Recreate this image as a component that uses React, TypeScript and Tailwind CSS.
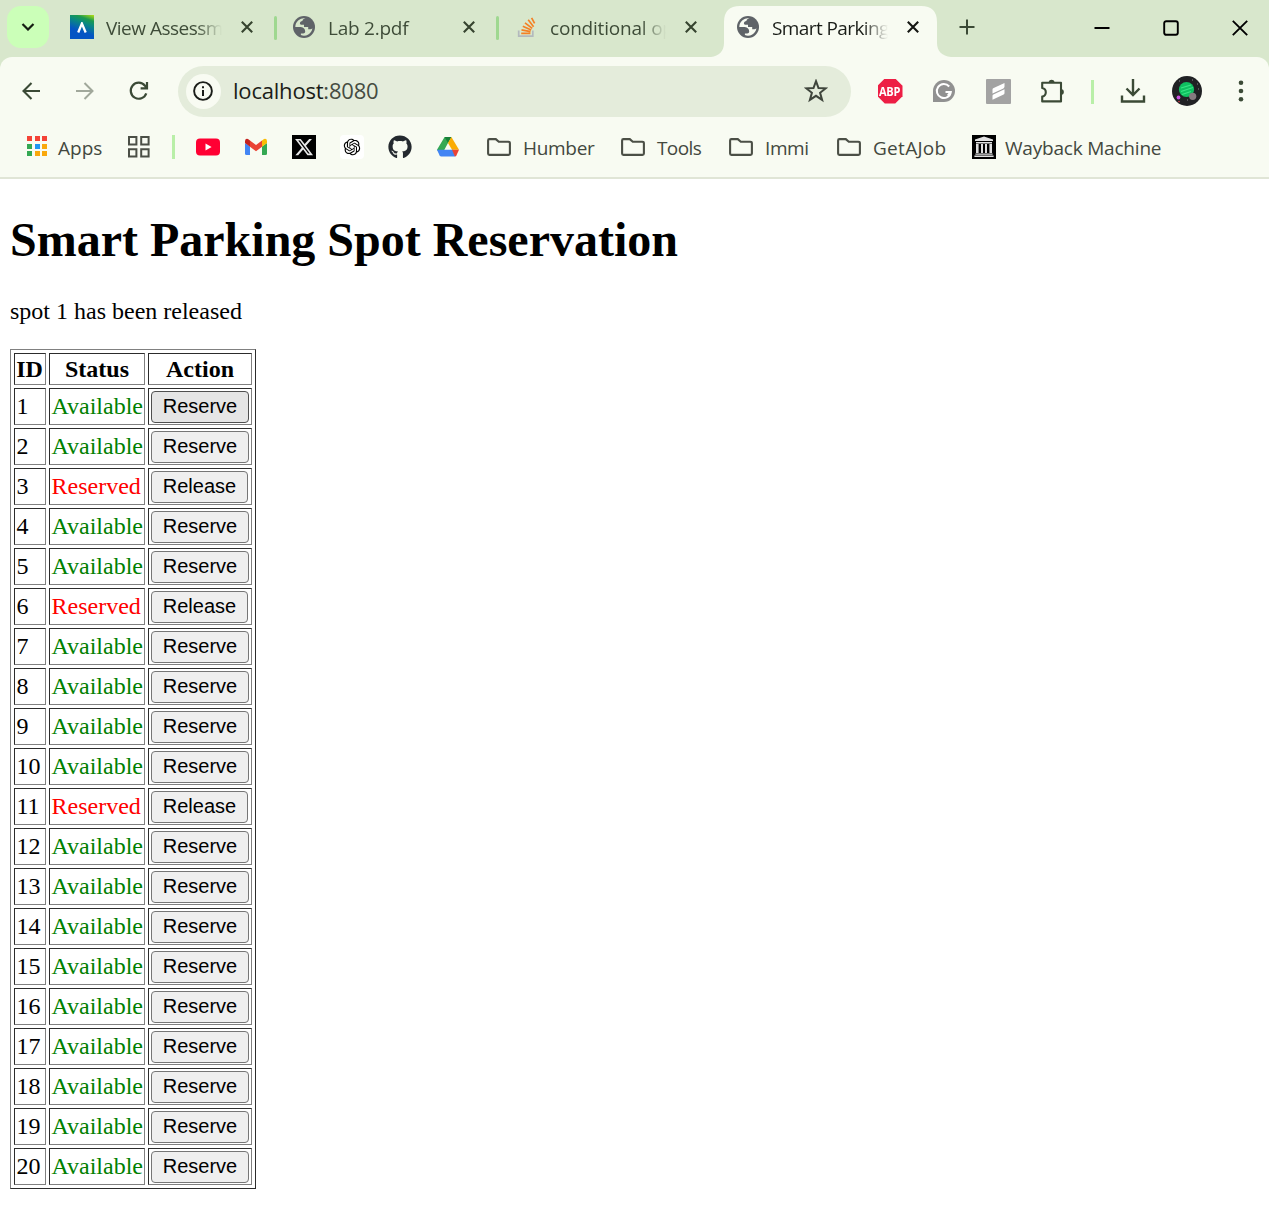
import type { ReactNode } from "react";
import { FaGithub, FaXTwitter } from "react-icons/fa6";
import { RiOpenaiFill } from "react-icons/ri";

function Globe({ land }: { land: string }) {
  return (
    <svg viewBox="0 0 22 22" className="size-[22px]">
      <circle cx="11" cy="11" r="11" fill="#5f6368" />
      <path
        d="M12.6 2.5C10.6 2.6 9.6 3.6 9.4 5C8 5.2 6.9 6 6.9 7.2C6.9 8.4 7.8 8.8 9.4 8.8H11V11H15.2V13.2H17.4C18.2 13.2 18.8 12.8 19.4 12.2A8.6 8.6 0 0 1 7.9 19.1V17.6H10.2C11.4 17.6 12.2 16.8 12.2 15.6C12.2 13 10.6 11.2 7.8 11H2.3A8.7 8.7 0 0 1 12.6 2.5Z"
        fill={land}
      />
    </svg>
  );
}

function StackOverflow() {
  return (
    <svg viewBox="0 0 24 24" className="size-6" fill="none">
      <path d="M4.7 15.5V21.2H18.8V15.5" stroke="#b3b9bd" strokeWidth="1.7" />
      <g stroke="#f48024" strokeWidth="1.7">
        <path d="M7.2 18.3H16.4M7.5 14.8L16.5 16.6M8.8 11.2L17.2 15M11 7.8L18.2 13.4M14.2 4.8L19.6 11.8M17.6 2.8L20.6 8.4" />
      </g>
    </svg>
  );
}

function Cross({ color }: { color: string }) {
  return (
    <svg viewBox="0 0 12 12" className="size-3">
      <path d="M.8.8L11.2 11.2M11.2.8L.8 11.2" stroke={color} strokeWidth="2.1" />
    </svg>
  );
}

function Tab({ icon, title, tracking, active, last }: { icon: ReactNode; title: string; tracking: string; active?: boolean; last?: boolean }) {
  return (
    <div className="relative flex h-[57px] w-[222px] shrink-0 items-center pl-4">
      {active && (
        <svg viewBox="0 0 240 51" className="absolute top-[6px] left-[-9px] h-[51px] w-[240px]">
          <path d="M0 51C8 50 13 45 13 37V16Q13 0 29 0H210Q226 0 226 16V37C226 45 231 50 240 51Z" fill="#f8fbf2" />
        </svg>
      )}
      <div className="relative -mt-[3px] flex size-6 items-center justify-center">{icon}</div>
      <div
        className={
          "relative -mt-0.5 ml-3 h-[30px] w-[116px] overflow-hidden text-[19px] leading-[30px] whitespace-nowrap [mask-image:linear-gradient(to_right,black_78%,transparent)] " +
          tracking +
          (active ? " text-[#1a1d18]" : " text-[#3e4c38]")
        }
      >
        {title}
      </div>
      <div className="relative -mt-[3px] ml-[19px]">
        <Cross color={active ? "#151713" : "#36442f"} />
      </div>
      {!active && !last && <div className="absolute top-4 right-0 h-6 w-[3px] translate-x-px rounded-full bg-[#9fd890]" />}
    </div>
  );
}

function TabStrip() {
  return (
    <div className="flex h-[57px] bg-[#d8e7cc]">
      <div className="mt-[6px] mr-[5px] ml-[7px] flex size-[42px] shrink-0 items-center justify-center rounded-[14px] bg-[#cbffb8]">
        <svg viewBox="0 0 14 8" className="h-2 w-3.5" fill="none">
          <path d="M1.5 1L7 6.5L12.5 1" stroke="#151d12" strokeWidth="2.2" />
        </svg>
      </div>
      <Tab
        title="View Assessm"
        tracking="tracking-[-0.5px]"
        icon={
          <div className="flex size-6 items-center justify-center bg-[linear-gradient(20deg,#0455c4_35%,#0a8a80_65%,#1a9a50_80%,#b8e010_100%)]">
            <svg viewBox="0 0 10 11" className="h-[11px] w-2.5">
              <path d="M1.2 10.5L4.9 1.5L8.7 10.5" fill="none" stroke="white" strokeWidth="2.3" />
            </svg>
          </div>
        }
      />
      <Tab title="Lab 2.pdf" tracking="tracking-[-0.25px]" icon={<Globe land="#d8e7cc" />} />
      <Tab title="conditional op" tracking="tracking-[-0.2px]" icon={<StackOverflow />} last />
      <Tab title="Smart Parking" tracking="tracking-[-0.6px]" icon={<Globe land="#f8fbf2" />} active />
      <div className="flex grow items-center justify-end">
        <svg viewBox="0 0 16 16" className="-mt-[3px] mr-auto ml-[17px] size-4">
          <path d="M8 .5V15.5M.5 8H15.5" stroke="#3b4a36" strokeWidth="2" />
        </svg>
        <svg viewBox="0 0 16 16" className="-mt-px mr-[53px] size-4">
          <path d="M.5 8H15.5" stroke="#000" strokeWidth="2" />
        </svg>
        <svg viewBox="0 0 16 16" className="-mt-px mr-[53px] size-4" fill="none">
          <rect x="1.2" y="1.2" width="13.6" height="13.6" rx="2" stroke="#000" strokeWidth="1.9" />
        </svg>
        <svg viewBox="0 0 16 16" className="-mt-px mr-[21px] size-4">
          <path d="M.8.8L15.2 15.2M15.2.8L.8 15.2" stroke="#000" strokeWidth="1.9" />
        </svg>
      </div>
    </div>
  );
}

function Cell({ children }: { children: ReactNode }) {
  return <div className="-mt-px flex w-[54px] shrink-0 items-center justify-center">{children}</div>;
}

function Toolbar() {
  return (
    <div className="bg-[#d8e7cc]">
      <div className="flex h-[69px] items-center rounded-t-[12px] bg-[#f8fbf2] pl-1">
        <Cell>
          <svg viewBox="0 0 18 18" className="size-[18px]" fill="none" stroke="#3b4a36" strokeWidth="2.1">
            <path d="M18 9H1.5M9.5 1L1.5 9L9.5 17" />
          </svg>
        </Cell>
        <Cell>
          <svg viewBox="0 0 18 18" className="size-[18px]" fill="none" stroke="#a1a89b" strokeWidth="2">
            <path d="M0 9H16.5M8.5 1L16.5 9L8.5 17" />
          </svg>
        </Cell>
        <Cell>
          <svg viewBox="0 0 20 20" className="size-5" fill="none" stroke="#3b4a36" strokeWidth="2.2">
            <path d="M17.3 12.4A8 8 0 1 1 16 4.7L17.8 7M18 1V7.4H11.6" />
          </svg>
        </Cell>
        <div className="ml-3 flex h-[51px] w-[673px] shrink-0 items-center rounded-full bg-[#e4ecdb] pl-2">
          <div className="flex size-[35px] items-center justify-center rounded-full bg-[#f8fbf2]">
            <svg viewBox="0 0 20 20" className="-mt-px -ml-px size-5" fill="none" stroke="#1a1d18">
              <circle cx="10" cy="10" r="8.9" strokeWidth="1.9" />
              <path d="M10 9V15M10 5.2V7.2" strokeWidth="2" />
            </svg>
          </div>
          <div className="-mt-0.5 ml-3 text-[22px] tracking-[-0.2px] text-[#1a1d18]">
            localhost<span className="text-[#464c42]">:8080</span>
          </div>
          <svg viewBox="0 0 24 24" className="-mt-px mr-[23px] ml-auto size-6" fill="none">
            <path d="M12 2.2L14.5 9L21.8 9.3L16.1 13.8L18.1 20.9L12 16.8L5.9 20.9L7.9 13.8L2.2 9.3L9.5 9Z" stroke="#3f453c" strokeWidth="2" />
          </svg>
        </div>
        <div className="ml-[12px] flex items-center">
          <Cell>
            <div className="flex size-[25px] items-center justify-center bg-[#ed1e45] [clip-path:polygon(29%_0,71%_0,100%_29%,100%_71%,71%_100%,29%_100%,0_71%,0_29%)]">
              <span className="scale-x-85 text-[13px] leading-none font-bold tracking-[-0.2px] text-white">ABP</span>
            </div>
          </Cell>
          <Cell>
            <svg viewBox="0 0 24 24" className="size-6" fill="none">
              <path d="M12 1A11 11 0 1 1 12 23H1V12A11 11 0 0 1 12 1Z" fill="#919191" />
              <path d="M17.2 7.5A7 7 0 1 0 18.8 13H13.5M15.8 16.5L18.6 12.8" stroke="white" strokeWidth="2" />
            </svg>
          </Cell>
          <Cell>
            <svg viewBox="0 0 25 25" className="size-[25px]">
              <rect width="25" height="25" rx="1" fill="#a3a3a3" />
              <path d="M6.5 10.4Q6.5 9.6 7.2 9.2L18.5 4V7.6Q18.5 8.8 17.4 9.4L6.5 14.6ZM6.5 16.8Q6.5 15.8 7.4 15.4L18.5 10.2V14Q18.5 15 17.6 15.5L6.5 20.8Z" fill="white" />
            </svg>
          </Cell>
          <Cell>
            <svg viewBox="0 0 26 26" className="size-[26px]">
              <path d="M3.2 4.8H22V23.4H3.2V18.6C8 17.6 8 10.9 3.2 10Z" fill="none" stroke="#3b4a36" strokeWidth="2.1" strokeLinejoin="round" />
              <path d="M9.6 4A3.1 3.1 0 0 1 15.6 4ZM22.6 11A3.1 3.1 0 0 1 22.6 17Z" fill="#3b4a36" />
            </svg>
          </Cell>
          <div className="mr-3 ml-[12px] h-6 w-[3px] bg-[#b9efa8]" />
          <Cell>
            <svg viewBox="0 0 26 26" className="size-[26px]" fill="none" stroke="#3b4a36" strokeWidth="2.4">
              <path d="M13 1V17M6.5 10.5L13 17L19.5 10.5M2 17.5V23.5H24V17.5" />
            </svg>
          </Cell>
          <Cell>
            <svg viewBox="0 0 30 30" className="size-[30px]">
              <circle cx="15" cy="15" r="15" fill="#202124" />
              <circle cx="14.5" cy="13.5" r="7.6" fill="#0fc060" />
              <path d="M9 12L19 9M9 15.5L21 11.5M10 18.5L19 15.5" stroke="#3be486" strokeWidth="1.1" />
              <circle cx="20.7" cy="20.3" r="3.6" fill="#857b80" />
              <circle cx="6.5" cy="21.5" r="1.9" fill="#c850e0" />
              <circle cx="7" cy="25.6" r=".8" fill="#d84050" />
              <path d="M20 4h1M25 8h1M7 5h1M26 13h1M15 24h1" stroke="#8a8a8e" />
            </svg>
          </Cell>
          <Cell>
            <svg viewBox="0 0 6 22" className="h-[22px] w-1.5" fill="#3b4a36">
              <circle cx="3" cy="2.7" r="2.3" />
              <circle cx="3" cy="11" r="2.3" />
              <circle cx="3" cy="19.3" r="2.3" />
            </svg>
          </Cell>
        </div>
      </div>
    </div>
  );
}

function Folder({ name, className }: { name: string; className: string }) {
  return (
    <div className={"flex shrink-0 items-center gap-3 " + className}>
      <svg viewBox="0 0 24 18" className="h-[18px] w-6 shrink-0" fill="none">
        <path d="M1.1 2.4Q1.1 1.1 2.4 1.1H8.8L11.8 3.8H21.4Q22.9 3.8 22.9 5.2V15.6Q22.9 16.9 21.4 16.9H2.4Q1.1 16.9 1.1 15.6Z" stroke="#4b4f46" strokeWidth="2.1" />
      </svg>
      <span className="mt-0.5">{name}</span>
    </div>
  );
}

const appDots = ["#f44336", "#f44336", "#f44336", "#34a853", "#2196f3", "#f9a80c", "#34a853", "#f9a80c", "#f9a80c"];

function Bookmarks() {
  return (
    <div className="flex h-[53px] items-center border-b-2 border-[#e0e5d6] bg-[#f8fbf2] pb-[9px] pl-[27px] text-[19px] whitespace-nowrap text-[#43483e]">
      <div className="mb-0.5 grid w-5 shrink-0 grid-cols-3 gap-[2.5px]">
        {appDots.map((color, i) => (
          <div key={i} className="size-[5px]" style={{ backgroundColor: color }} />
        ))}
      </div>
      <span className="mt-0.5 ml-[11px] w-[70px] shrink-0">Apps</span>
      <svg viewBox="0 0 22 22" className="size-[22px] shrink-0" fill="none" stroke="#4b4f46" strokeWidth="2">
        <path d="M1 1H8.4V8.4H1ZM13.2 1H20.6V8.4H13.2ZM1 13.2H8.4V20.6H1ZM13.2 13.2H20.6V20.6H13.2Z" />
      </svg>
      <div className="ml-[22px] h-6 w-[3px] shrink-0 bg-[#b9efa8]" />
      <div className="ml-[21px] flex shrink-0 items-center gap-6">
        <svg viewBox="0 0 24 18" className="h-[18px] w-6">
          <rect y=".5" width="24" height="17" rx="4" fill="#ff0033" />
          <path d="M9.5 5.6L15.6 9L9.5 12.4Z" fill="white" />
        </svg>
        <svg viewBox="0 0 24 24" className="size-6">
          <path d="M1 8V18.8Q1 20 2.5 20H6V11.5Z" fill="#4285f4" />
          <path d="M23 8V18.8Q23 20 21.5 20H18V11.5Z" fill="#34a853" />
          <path d="M18 5.5V11.8L23 8V6Q22.8 3.2 20 4Z" fill="#fbbc04" />
          <path d="M6 5.5V11.8L1 8V6Q1.2 3.2 4 4Z" fill="#c5221f" />
          <path d="M6 5.5L12 10L18 5.5V11.8L12 16.2L6 11.8Z" fill="#ea4335" />
        </svg>
        <div className="flex size-6 items-center justify-center bg-black">
          <FaXTwitter className="size-5 text-[#e8e8e8]" />
        </div>
        <div className="flex size-6 items-center justify-center rounded bg-white">
          <RiOpenaiFill className="size-5 text-black" />
        </div>
        <FaGithub className="size-6 text-[#24292f]" />
        <svg viewBox="0 0 24 24" className="size-6">
          <path d="M8.6 2H15.4L12 8L5.3 20.5L1 14.8Z" fill="#34a853" />
          <path d="M8.6 2H15.4L12 8Z" fill="#188038" />
          <path d="M15.4 2L23 14.8H16L12 8Z" fill="#fbac04" />
          <path d="M1 14.8H17L19.3 21.5H5.3Q4.2 21.5 3.5 20.3Z" fill="#4285f4" />
          <path d="M16 14.8H23L20.5 20.3Q19.8 21.5 18.9 21.5Z" fill="#ea4335" />
        </svg>
      </div>
      <Folder name="Humber" className="ml-[27px] w-[134px] tracking-[-0.3px]" />
      <Folder name="Tools" className="w-[108px] tracking-[-0.6px]" />
      <Folder name="Immi" className="w-[108px] tracking-[-0.4px]" />
      <Folder name="GetAJob" className="w-[135px] tracking-[0.3px]" />
      <svg viewBox="0 0 24 24" className="mr-[9px] size-6 shrink-0">
        <rect width="24" height="24" fill="#000" />
        <path d="M3 4.6L12 1.5L21 4.6V6H3ZM4 7H20V8.6H4ZM4 9H6.6V18H4ZM9 9H11V18H9ZM13 9H15V18H13ZM17.4 9H20V18H17.4ZM3.4 18.6H20.6V19.8H3.4ZM2.4 20.4H21.6V22H2.4Z" fill="#e0e0e0" />
      </svg>
      <span className="mt-0.5 tracking-[-0.2px]">Wayback Machine</span>
    </div>
  );
}

const reserved = [3, 6, 11];
const cell = "border border-t-[#2c2c2c] border-r-[#808080] border-b-[#808080] border-l-[#2c2c2c] p-0";

function SpotTable() {
  return (
    <table className="mt-[24px] w-[246px] table-fixed border-separate border-spacing-[3px] border border-t-[#808080] border-r-[#2c2c2c] border-b-[#2c2c2c] border-l-[#808080] text-[24px] leading-[30px]">
      <colgroup>
        <col className="w-8" />
        <col className="w-24" />
        <col className="w-[104px]" />
      </colgroup>
      <thead>
        <tr className="h-8">
          <th className={cell}>
            <span className="-ml-px">ID</span>
          </th>
          <th className={cell}>Status</th>
          <th className={cell}>Action</th>
        </tr>
      </thead>
      <tbody>
        {Array.from({ length: 20 }, (_, i) => i + 1).map((id) => {
          const taken = reserved.includes(id);
          return (
            <tr key={id} className="h-[37px]">
              <td className={cell + " pb-0.5 pl-[1.5px]"}>{id}</td>
              <td className={cell + " pb-0.5 pl-[1.5px] " + (taken ? "text-[#ff0000]" : "text-[#008000]")}>
                {taken ? "Reserved" : "Available"}
              </td>
              <td className={cell + " pl-0.5"}>
                <button
                  className={
                    "block h-8 rounded-[4px] border text-center font-['Liberation_Sans',Arial,sans-serif] text-[20px] leading-[29px] text-black " +
                    (id === 1 ? "border-[#4f4f4f] bg-[#e5e5e5] " : "border-[#767676] bg-[#efefef] ") +
                    (taken ? "w-[97px]" : "w-[98px]")
                  }
                >
                  {taken ? "Release" : "Reserve"}
                </button>
              </td>
            </tr>
          );
        })}
      </tbody>
    </table>
  );
}

export default function App() {
  return (
    <div className="h-[1230px] w-[1269px] overflow-hidden bg-white">
      <header className="font-['Open_Sans','Noto_Sans',sans-serif]">
        <TabStrip />
        <Toolbar />
        <Bookmarks />
      </header>
      <main className="px-[10px] pt-[34px] font-['Liberation_Serif','Times_New_Roman',serif] text-black">
        <h1 className="text-[48px] leading-[54px] font-bold">Smart Parking Spot Reservation</h1>
        <p className="mt-[30px] text-[24px] leading-[28px]">spot 1 has been released</p>
        <SpotTable />
      </main>
    </div>
  );
}
